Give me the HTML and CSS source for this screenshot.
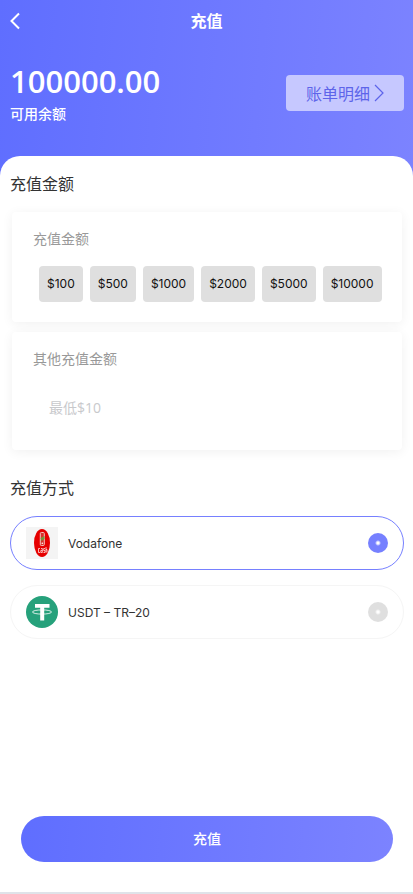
FILE: index.html
```html
<!DOCTYPE html>
<html lang="zh-CN">

<head>
  <meta charset="UTF-8">
  <title>充值</title>
  <meta name="viewport" content="width=device-width, initial-scale=1.0">
  <link rel="stylesheet" href="styles.css">
</head>

<body>
  <header class="header">
    <div class="nav">
      <button class="nav-back" type="button" aria-label="返回">
        <svg width="10" height="18" viewBox="0 0 10 18"><path d="M9 1.5L1.5 9L9 16.5" fill="none" stroke="#fff" stroke-width="2"/></svg>
      </button>
      <h1 class="nav-title">充值</h1>
    </div>
    <div class="balance">
      <div>
        <p class="balance-num">100000.00</p>
        <p class="balance-text">可用余额</p>
      </div>
      <a class="bill-link" href="#">
        账单明细
        <svg width="10" height="18" viewBox="0 0 10 18"><path d="M1 1L9 9L1 17" fill="none" stroke="#5d64ea" stroke-width="1.2"/></svg>
      </a>
    </div>
  </header>

  <main class="main">
    <h2 class="title">充值金额</h2>
    <section class="card">
      <h3 class="card-title">充值金额</h3>
      <div class="amounts">
        <button class="amount" type="button">$100</button>
        <button class="amount" type="button">$500</button>
        <button class="amount" type="button">$1000</button>
        <button class="amount" type="button">$2000</button>
        <button class="amount" type="button">$5000</button>
        <button class="amount" type="button">$10000</button>
      </div>
    </section>
    <section class="card">
      <label class="card-title" for="other-amount">其他充值金额</label>
      <input class="other-input" type="text" id="other-amount" placeholder="最低$10">
    </section>

    <h2 class="title title-method">充值方式</h2>
    <div class="methods">
      <label class="method" for="pay-vodafone">
        <svg class="method-icon" viewBox="0 0 32 32">
          <rect width="32" height="32" fill="#f4f4f4"/>
          <ellipse cx="16" cy="16" rx="8" ry="14" fill="#e60000"/>
          <rect x="14.3" y="5.5" width="4" height="13" rx="1" fill="#d8332b" stroke="#f3c4bd" stroke-width="1"/>
          <path d="M14.5 11l4-2v3l-3 2z" fill="#6f9a3c"/>
          <circle cx="16.3" cy="16.3" r="0.8" fill="#fff"/>
          <path d="M14 21.5h-1.500v4h1.500M15 21.500h1.300v4h-1.500v-2h1.500M19 21.500h-1.300v2h1.300v2h-1.500M20 20v5.500M20 22.500h1v3" fill="none" stroke="#ffdedb" stroke-width="0.8"/>
        </svg>
        <span class="method-name">Vodafone</span>
        <input class="method-radio" type="radio" name="pay" id="pay-vodafone" checked>
      </label>
      <label class="method" for="pay-usdt">
        <svg class="method-icon" viewBox="0 0 32 32">
          <circle cx="16" cy="16" r="16" fill="#26a17b"/>
          <ellipse cx="16" cy="16" rx="9.600" ry="2.100" fill="none" stroke="#fff" stroke-width="0.8"/>
          <path d="M9 8h14.500v3.800h-5.300v12.700h-4V11.800H9z" fill="#fff"/>
        </svg>
        <span class="method-name">USDT – TR–20</span>
        <input class="method-radio" type="radio" name="pay" id="pay-usdt">
      </label>
    </div>
  </main>

  <footer class="footer">
    <button class="submit" type="button">充值</button>
  </footer>
</body>

</html>
```

FILE: styles.css
```css
* {
  margin: 0;
  padding: 0;
  box-sizing: border-box;
}

body {
  display: flex;
  flex-direction: column;
  min-height: 100vh;
  background-color: #fff;
  color: #333;
  font-family: "Open Sans", "Noto Sans CJK SC", sans-serif;
  font-size: 14px;
}

button,
input {
  border: none;
  font-family: inherit;
}

button {
  cursor: pointer;
}

svg {
  display: block;
  flex-shrink: 0;
}

/* 顶部余额 */
.header {
  padding-bottom: 50px;
  background: linear-gradient(95deg, #5f6eff, #7c83ff);
  color: #fff;
}

.nav {
  display: grid;
  grid-template-columns: 40px 1fr 40px;
  align-items: center;
  height: 42px;
}

.nav-back {
  padding: 10px;
  background: none;
}

.nav-title {
  font-size: 16px;
  line-height: 24px;
  text-align: center;
}

.balance {
  display: flex;
  justify-content: space-between;
  align-items: center;
  padding: 18px 9px 0 10px;
}

.balance-num {
  font-size: 31px;
  font-weight: 600;
  line-height: 42px;
}

.balance-text {
  font-weight: 500;
  line-height: 24px;
}

.bill-link {
  display: flex;
  align-items: center;
  gap: 4px;
  height: 36px;
  padding: 0 20px;
  border-radius: 4px;
  background-color: #c6c8ff;
  color: #5d64ea;
  font-size: 16px;
  text-decoration: none;
}

/* 内容区 */
.main {
  margin-top: -20px;
  padding: 16px 9px 20px 10px;
  border-radius: 20px 20px 0 0;
  background-color: #fff;
}

.title {
  margin-bottom: 16px;
  font-size: 16px;
  font-weight: 400;
  line-height: 24px;
}

.title-method {
  margin-top: 26px;
}

.card {
  margin: 0 2px 10px;
  padding: 16px 16px 20px 21px;
  border-radius: 4px;
  background-color: #fff;
  box-shadow: 0 2px 12px rgba(0, 0, 0, 0.06);
}

.card-title {
  display: block;
  color: #999;
  font-size: 14px;
  font-weight: 400;
  line-height: 22px;
}

.amounts {
  display: flex;
  flex-wrap: wrap;
  gap: 7px;
  margin-top: 16px;
  padding-left: 6px;
}

.amount {
  height: 36px;
  padding: 0 8px 2px;
  border-radius: 4px;
  background-color: #dfdfdf;
  color: #111;
  font-family: Inter, sans-serif;
  font-size: 12px;
}

.other-input {
  display: block;
  width: 100%;
  height: 44px;
  margin-top: 16px;
  padding: 0 16px 2px;
  background: none;
  color: #333;
  font-size: 14px;
  outline: none;
}

.other-input::placeholder {
  color: #c8c9cc;
}

.methods {
  display: flex;
  flex-direction: column;
  gap: 15px;
}

.method {
  display: flex;
  align-items: center;
  gap: 10px;
  height: 54px;
  padding: 0 15px;
  border: 1px solid #f5f5f5;
  border-radius: 27px;
  cursor: pointer;
}

.method:has(:checked) {
  border-color: #7680ff;
}

.method-icon {
  width: 32px;
  height: 32px;
}

.method-name {
  flex: 1;
  font-family: Inter, sans-serif;
  font-size: 12px;
}

.method-radio {
  width: 20px;
  height: 20px;
  border-radius: 50%;
  background: radial-gradient(circle, #fff 1px, #dfdfdf 3px);
  appearance: none;
}

.method-radio:checked {
  background: radial-gradient(circle, #fff 1px, #7680ff 3px);
}

/* 底部按钮 */
.footer {
  margin-top: auto;
  padding: 0 20px 30px 21px;
  border-bottom: 2px solid #dfe3e9;
}

.submit {
  display: block;
  width: 100%;
  height: 46px;
  padding-bottom: 2px;
  border-radius: 23px;
  background: linear-gradient(95deg, #5f6eff, #7c83ff);
  color: #fff;
  font-size: 14px;
  font-weight: 500;
}
```
